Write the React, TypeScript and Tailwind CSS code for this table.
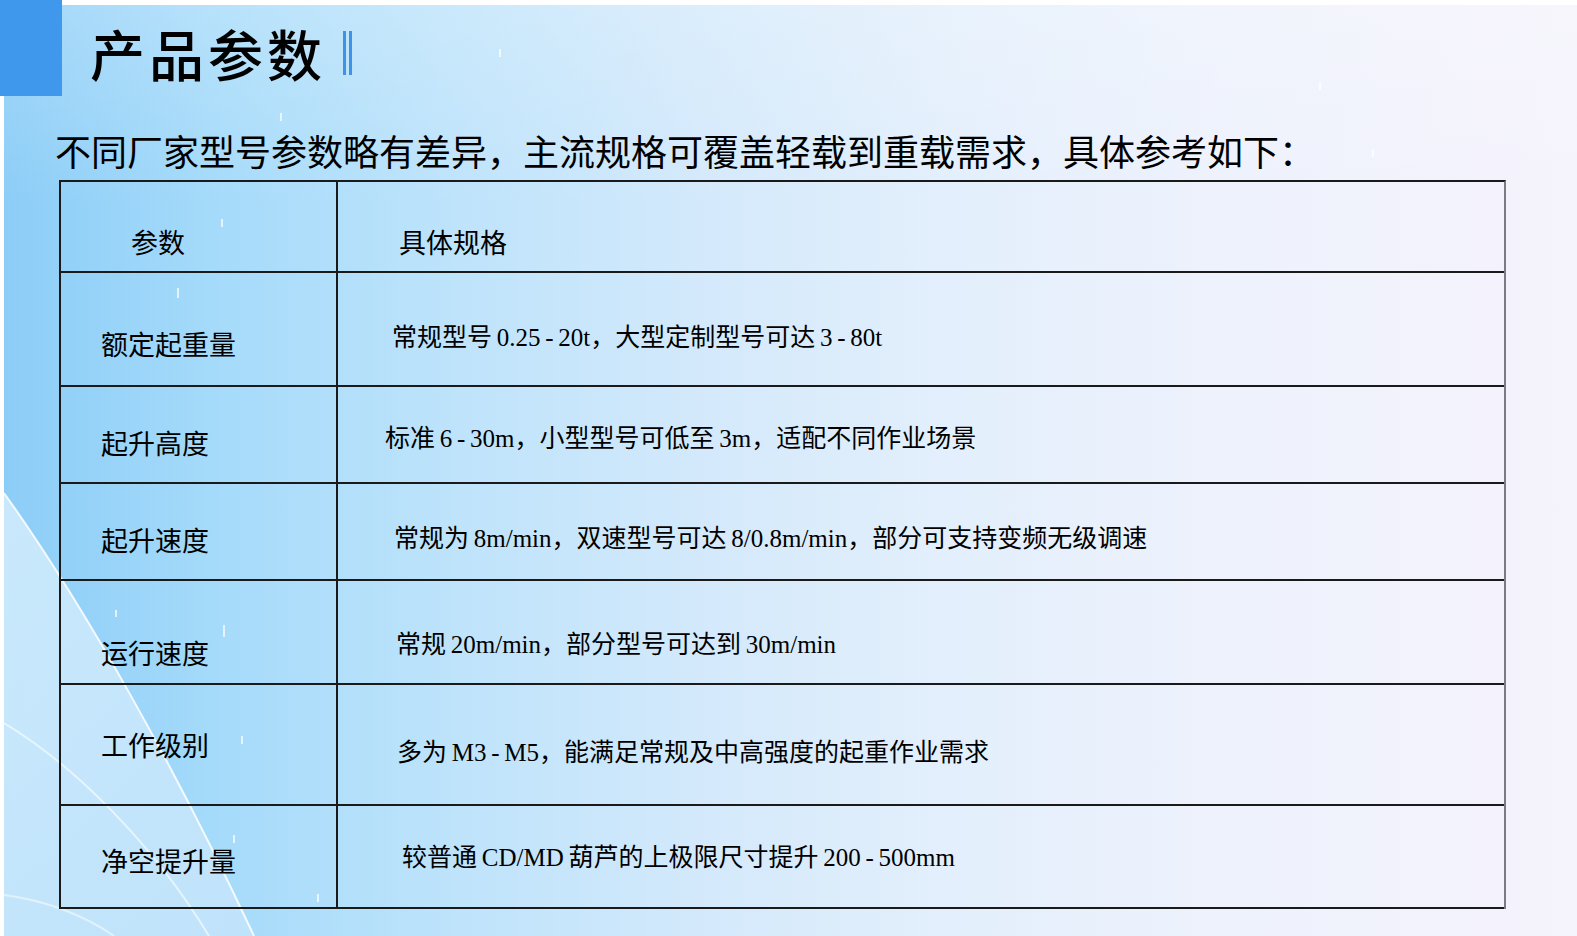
const cjk = "font-['Noto_Sans_CJK_SC',sans-serif]";
const mixed = "font-['Liberation_Serif','Noto_Sans_CJK_SC',serif]";

interface Row {
  label: string;
  spec: string;
  h: string;
  labelPt: string;
  specPt: string;
  specPl: string;
}

const rows: Row[] = [
  {
    label: "额定起重量",
    spec: "常规型号 0.25 - 20t，大型定制型号可达 3 - 80t",
    h: "h-[114px]",
    labelPt: "pt-[56px]",
    specPt: "pt-[50px]",
    specPl: "pl-[54px]",
  },
  {
    label: "起升高度",
    spec: "标准 6 - 30m，小型型号可低至 3m，适配不同作业场景",
    h: "h-[97px]",
    labelPt: "pt-[41px]",
    specPt: "pt-[37px]",
    specPl: "pl-[47px]",
  },
  {
    label: "起升速度",
    spec: "常规为 8m/min，双速型号可达 8/0.8m/min，部分可支持变频无级调速",
    h: "h-[97px]",
    labelPt: "pt-[41px]",
    specPt: "pt-[40px]",
    specPl: "pl-[56px]",
  },
  {
    label: "运行速度",
    spec: "常规 20m/min，部分型号可达到 30m/min",
    h: "h-[104px]",
    labelPt: "pt-[57px]",
    specPt: "pt-[49px]",
    specPl: "pl-[58px]",
  },
  {
    label: "工作级别",
    spec: "多为 M3 - M5，能满足常规及中高强度的起重作业需求",
    h: "h-[121px]",
    labelPt: "pt-[45px]",
    specPt: "pt-[53px]",
    specPl: "pl-[59px]",
  },
  {
    label: "净空提升量",
    spec: "较普通 CD/MD 葫芦的上极限尺寸提升 200 - 500mm",
    h: "h-[103px]",
    labelPt: "pt-[40px]",
    specPt: "pt-[37px]",
    specPl: "pl-[64px]",
  },
];

function Backdrop() {
  return (
    <div className="absolute left-[4px] top-[5px] right-0 bottom-0 bg-[linear-gradient(90deg,#8ccdf7_0%,#a6dbfa_14%,#bde3fb_28%,#d3e9fb_44%,#e3effc_60%,#eef2fc_78%,#f5f3fc_100%)]">
      <svg className="absolute inset-0" width="1573" height="931" viewBox="0 0 1573 931">
        <defs>
          <linearGradient id="wedge" x1="0" y1="0" x2="1" y2="1">
            <stop offset="0" stopColor="#d0ebfc" stopOpacity="0.9" />
            <stop offset="1" stopColor="#c2e4fb" stopOpacity="0.9" />
          </linearGradient>
          <linearGradient id="topGlow" x1="0" y1="0" x2="0" y2="1">
            <stop offset="0" stopColor="#ffffff" stopOpacity="0.2" />
            <stop offset="1" stopColor="#ffffff" stopOpacity="0" />
          </linearGradient>
        </defs>
        <rect x="0" y="0" width="1573" height="200" fill="url(#topGlow)" />
        <path d="M0 488 C 80 600, 170 760, 250 931 L 0 931 Z" fill="url(#wedge)" />
        <path d="M0 488 C 80 600, 170 760, 250 931" stroke="#ffffff" strokeOpacity="0.85" strokeWidth="2" fill="none" />
        <path d="M0 718 C 70 760, 150 840, 205 931" stroke="#ffffff" strokeOpacity="0.6" strokeWidth="2" fill="none" />
        <path d="M0 890 C 40 895, 80 910, 110 931" stroke="#ffffff" strokeOpacity="0.5" strokeWidth="2" fill="none" />
        <g stroke="#ffffff" strokeOpacity="0.7" strokeWidth="2">
          <line x1="277" y1="108" x2="277" y2="116" />
          <line x1="218" y1="214" x2="218" y2="222" />
          <line x1="174" y1="283" x2="174" y2="293" />
          <line x1="112" y1="605" x2="112" y2="612" />
          <line x1="220" y1="620" x2="220" y2="632" />
          <line x1="238" y1="731" x2="238" y2="739" />
          <line x1="230" y1="830" x2="230" y2="838" />
          <line x1="314" y1="889" x2="314" y2="897" />
          <line x1="420" y1="152" x2="420" y2="160" />
          <line x1="496" y1="44" x2="496" y2="52" />
          <line x1="1316" y1="77" x2="1316" y2="85" />
          <line x1="1369" y1="144" x2="1369" y2="152" />
        </g>
      </svg>
    </div>
  );
}

export default function App() {
  return (
    <div className="relative w-[1577px] h-[936px] overflow-hidden bg-white text-black">
      <Backdrop />
      <div className="absolute left-0 top-0 w-[62px] h-[96px] bg-[#4098ec]" />

      <div className="relative flex flex-col">
        <div className="flex items-center h-[104px] pl-[90px]">
          <h1 className={`${cjk} text-[55px] leading-none font-medium tracking-[4px]`}>产品参数</h1>
          <div className="flex gap-[3px] ml-[17px] mt-[2px]">
            <span className="block w-[3px] h-[44px] bg-[#3f93e6]" />
            <span className="block w-[3px] h-[44px] bg-[#3f93e6]" />
          </div>
        </div>

        <p className={`${cjk} pl-[55px] mt-[24px] text-[36px] leading-[44px]`}>
          不同厂家型号参数略有差异，主流规格可覆盖轻载到重载需求，具体参考如下：
        </p>

        <div className="ml-[59px] mt-[8px] w-[1447px] border-l-2 border-t-2 border-[#1a1a1a] border-r-2 border-r-[#7a7a82]">
          <div className="flex h-[91px] border-b-2 border-[#1a1a1a]">
            <div className={`${cjk} w-[277px] shrink-0 border-r-2 border-[#1a1a1a] pl-[70px] pt-[45px] text-[27px] leading-[30px]`}>
              参数
            </div>
            <div className={`${cjk} flex-1 pl-[61px] pt-[45px] text-[27px] leading-[30px]`}>具体规格</div>
          </div>
          {rows.map((r) => (
            <div key={r.label} className={`flex ${r.h} border-b-2 border-[#1a1a1a]`}>
              <div className={`${cjk} w-[277px] shrink-0 border-r-2 border-[#1a1a1a] pl-[40px] ${r.labelPt} text-[27px] leading-[30px]`}>
                {r.label}
              </div>
              <div className={`${mixed} flex-1 ${r.specPl} ${r.specPt} text-[25px] leading-[30px] [word-spacing:-1.5px]`}>
                {r.spec}
              </div>
            </div>
          ))}
        </div>
      </div>
    </div>
  );
}
